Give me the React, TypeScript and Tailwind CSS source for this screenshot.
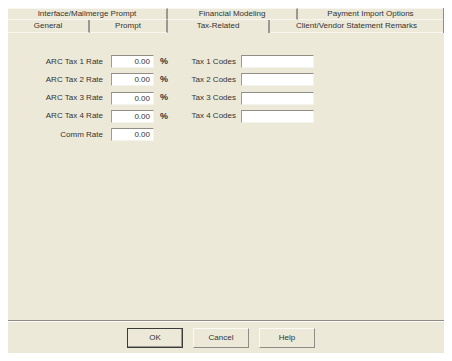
const font = { fontFamily: '"Liberation Sans", Arial, sans-serif' };

const topTabs = [
  { label: 'Interface/Mailmerge Prompt', w: 'w-[160px]' },
  { label: 'Financial Modeling', w: 'w-[130px]' },
  { label: 'Payment Import Options', w: 'flex-1' },
];

const bottomTabs = [
  { label: 'General', w: 'w-[82px]', active: false },
  { label: 'Prompt', w: 'w-[78px]', active: false },
  { label: 'Tax-Related', w: 'w-[102px]', active: true },
  { label: 'Client/Vendor Statement Remarks', w: 'flex-1', active: false },
];

const rows = [1, 2, 3, 4];

function Field({ w, value }: { w: string; value?: string }) {
  return (
    <div
      className={`${w} h-[13px] bg-white border-t border-l border-t-[#8f8d86] border-l-[#9e9c94] border-r border-b border-r-[#f4f3ee] border-b-[#f4f3ee] text-right pr-[3px] leading-[11px] text-[8px] text-[#333]`}
    >
      {value}
    </div>
  );
}

function Btn({ label, primary }: { label: string; primary?: boolean }) {
  return (
    <button
      className={`w-[56px] h-[20px] text-[8px] text-[#333] bg-[#ece9d8] ${
        primary
          ? 'border border-[#3c3c3c] shadow-[inset_-1px_-1px_0_#9a988f]'
          : 'border border-t-[#fbfaf5] border-l-[#fbfaf5] border-r-[#8e8c84] border-b-[#8e8c84]'
      }`}
    >
      {label}
    </button>
  );
}

export default function App() {
  return (
    <div className="w-[452px] h-[361px] bg-white p-2" style={font}>
      <div className="w-[436px] h-[345px] bg-[#ece9d8] flex flex-col text-[8px] text-[#333]">
        {/* tabs */}
        <div className="flex h-[12px] border-r border-[#8e8c84]">
          {topTabs.map((t, i) => (
            <div
              key={t.label}
              className={`${t.w} flex items-center justify-center border-t border-b border-t-[#f7f6f0] border-b-[#f7f6f0] ${
                i < topTabs.length - 1 ? 'border-r-2 border-r-[#9a988f]' : ''
              }`}
            >
              {t.label}
            </div>
          ))}
        </div>
        <div className="flex h-[13px] border-r border-[#8e8c84]">
          {bottomTabs.map((t, i) => (
            <div
              key={t.label}
              className={`${t.w} flex items-center justify-center ${
                t.active ? 'pb-[2px]' : 'border-b border-b-[#f7f6f0]'
              } ${i < bottomTabs.length - 1 ? 'border-r-2 border-r-[#9a988f]' : ''}`}
            >
              {t.label}
            </div>
          ))}
        </div>

        {/* form */}
        <div className="flex-1 pt-[22px] flex flex-col gap-[5.3px]">
          {rows.map((n) => (
            <div key={n} className="flex items-center h-[13px]">
              <div className="w-[95px] text-right">ARC Tax {n} Rate</div>
              <div className="ml-[8px]">
                <Field w="w-[43px]" value="0.00" />
              </div>
              <div className="ml-[6px] w-[10px] font-bold text-[9px]">%</div>
              <div className="w-[66px] text-right">Tax {n} Codes</div>
              <div className="ml-[5px]">
                <Field w="w-[73px]" />
              </div>
            </div>
          ))}
          <div className="flex items-center h-[13px]">
            <div className="w-[95px] text-right">Comm Rate</div>
            <div className="ml-[8px]">
              <Field w="w-[43px]" value="0.00" />
            </div>
          </div>
        </div>

        {/* buttons */}
        <div className="border-t border-[#8e8c84] shadow-[inset_0_1px_0_#fbfaf5] h-[33px] pt-[7px] pl-[119px] flex gap-[10px]">
          <Btn label="OK" primary />
          <Btn label="Cancel" />
          <Btn label="Help" />
        </div>
      </div>
    </div>
  );
}
